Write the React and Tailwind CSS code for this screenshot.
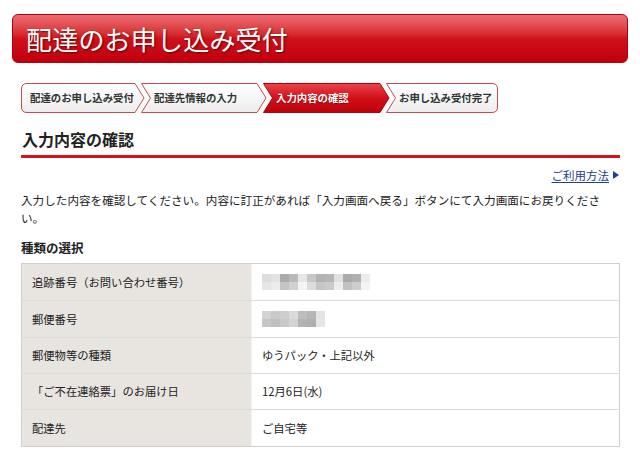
const steps = [
  { label: '配達のお申し込み受付', kind: 'first', w: 124, cls: 'w-[124px]' },
  { label: '配達先情報の入力', kind: 'mid', w: 126, cls: 'w-[126px] -ml-[4px]' },
  { label: '入力内容の確認', kind: 'mid', w: 127, cls: 'w-[127px] -ml-[4px]', active: true },
  { label: 'お申し込み受付完了', kind: 'last', w: 112, cls: 'w-[112px] -ml-[4px]' },
];

function shape(kind, w) {
  if (kind === 'first')
    return `M6 0.5 H${w - 10} L${w - 1} 15 L${w - 10} 29.5 H6 Q0.5 29.5 0.5 24 V6 Q0.5 0.5 6 0.5 Z`;
  if (kind === 'last')
    return `M0.5 0.5 H${w - 6} Q${w - 0.5} 0.5 ${w - 0.5} 6 V24 Q${w - 0.5} 29.5 ${w - 6} 29.5 H0.5 L9.5 15 Z`;
  return `M0.5 0.5 H${w - 10} L${w - 1} 15 L${w - 10} 29.5 H0.5 L9.5 15 Z`;
}

function Step({ label, kind, w, cls, active, i }) {
  return (
    <div className={`relative h-[30px] flex items-center ${cls} ${kind === 'first' ? 'pl-[9px]' : 'pl-[13px]'}`}>
      <svg className="absolute inset-0" width={w} height="30" viewBox={`0 0 ${w} 30`}>
        <defs>
          <linearGradient id={`sg${i}`} x1="0" y1="0" x2="0" y2="1">
            {active ? (
              <>
                <stop offset="0" stopColor="#e9444b" />
                <stop offset="0.5" stopColor="#d3101a" />
                <stop offset="1" stopColor="#bb0009" />
              </>
            ) : (
              <>
                <stop offset="0" stopColor="#ffffff" />
                <stop offset="1" stopColor="#ededed" />
              </>
            )}
          </linearGradient>
        </defs>
        <path d={shape(kind, w)} fill={`url(#sg${i})`} stroke={active ? '#b3000a' : '#c54a51'} strokeWidth="1" />
      </svg>
      <span
        className={`relative text-[10.4px] font-bold leading-none ${
          active ? 'text-white [text-shadow:0_1px_1px_rgba(90,0,0,0.6)]' : 'text-[#333]'
        }`}
      >
        {label}
      </span>
    </div>
  );
}

const mosaic1 = [
  ['bg-[#dedede]', 'bg-[#e2e2e2]', 'bg-[#ababab]', 'bg-[#b9b9b9]', 'bg-[#e6e6e6]', 'bg-[#c6c6c6]', 'bg-[#b3b3b3]', 'bg-[#b6b6b6]', 'bg-[#e0e0e0]', 'bg-[#a9a9a9]', 'bg-[#b0b0b0]', 'bg-[#ececec]'],
  ['bg-[#e6e6e6]', 'bg-[#ececec]', 'bg-[#c4c4c4]', 'bg-[#d0d0d0]', 'bg-[#f4f4f4]', 'bg-[#dcdcdc]', 'bg-[#c6c6c6]', 'bg-[#cbcbcb]', 'bg-[#ededed]', 'bg-[#c2c2c2]', 'bg-[#cdcdcd]', 'bg-[#f4f4f4]'],
];
const mosaic2 = [
  ['bg-[#d3d3d3]', 'bg-[#c9c9c9]', 'bg-[#cdcdcd]', 'bg-[#dadada]', 'bg-[#bdbdbd]', 'bg-[#b6b6b6]', 'bg-[#e3e3e3]'],
  ['bg-[#c6c6c6]', 'bg-[#bfbfbf]', 'bg-[#c8c8c8]', 'bg-[#d3d3d3]', 'bg-[#b3b3b3]', 'bg-[#b0b0b0]', 'bg-[#e6e6e6]'],
];

function Mosaic({ grid }) {
  return (
    <div className="flex flex-col blur-[0.6px]">
      {grid.map((row, r) => (
        <div key={r} className="flex">
          {row.map((c, k) => (
            <div key={k} className={`w-[9px] h-[8px] ${c}`} />
          ))}
        </div>
      ))}
    </div>
  );
}

const rows = [
  { label: '追跡番号（お問い合わせ番号）', value: <Mosaic grid={mosaic1} />, h: 'h-[36px]' },
  { label: '郵便番号', value: <Mosaic grid={mosaic2} />, h: 'h-[36px]' },
  { label: '郵便物等の種類', value: 'ゆうパック・上記以外', h: 'h-[35px]' },
  { label: '「ご不在連絡票」のお届け日', value: '12月6日(水)', h: 'h-[35px]' },
  { label: '配達先', value: 'ご自宅等', h: 'h-[36px]' },
];

export default function App() {
  return (
    <div className="w-[640px] h-[460px] overflow-hidden bg-white text-[#222] [font-family:'Noto_Sans_CJK_JP','Noto_Sans',sans-serif]">
      <div className="mx-[12px] mt-[14px] h-[49px] rounded-[6px] border border-[#b2000c] bg-gradient-to-b from-[#ec6b72] via-[#d0101b] to-[#c2000d] flex items-center pl-[13px]">
        <h1 className="text-[26px] leading-none text-white tracking-[0.2px] [text-shadow:1px_1px_2px_rgba(60,0,0,0.75)]">
          配達のお申し込み受付
        </h1>
      </div>

      <div className="mt-[20px] ml-[21px] flex">
        {steps.map((s, i) => (
          <Step key={i} i={i} {...s} />
        ))}
      </div>

      <div className="ml-[21px] w-[599px]">
        <h2 className="mt-[17px] text-[16px] leading-[18px] font-bold pb-[7px] border-b-[3px] border-[#d7121c] pl-[1px]">
          入力内容の確認
        </h2>

        <div className="mt-[10px] flex justify-end items-center leading-[14px]">
          <a className="text-[11.5px] text-[#23408e] underline underline-offset-2">ご利用方法</a>
          <svg width="6" height="8" viewBox="0 0 6 8" className="ml-[4px] mr-[1px]">
            <path d="M0 0 L6 4 L0 8 Z" fill="#23408e" />
          </svg>
        </div>

        <p className="mt-[9px] text-[11.6px] leading-[18px]">
          入力した内容を確認してください。内容に訂正があれば「入力画面へ戻る」ボタンにて入力画面にお戻りください。
        </p>

        <h3 className="mt-[13px] text-[12.5px] leading-[16px] font-bold">種類の選択</h3>

        <div className="mt-[7px] border border-[#cfcfcf] text-[11.3px]">
          {rows.map((r, i) => (
            <div key={i} className={`flex ${i < rows.length - 1 ? 'border-b border-[#dcdcdc]' : ''}`}>
              <div className={`w-[230px] ${r.h} bg-[#e8e4e0] flex items-center pl-[10px] border-r border-[#f4f2f0]`}>
                {r.label}
              </div>
              <div className={`flex-1 ${r.h} flex items-center pl-[10px]`}>{r.value}</div>
            </div>
          ))}
        </div>
      </div>
    </div>
  );
}
